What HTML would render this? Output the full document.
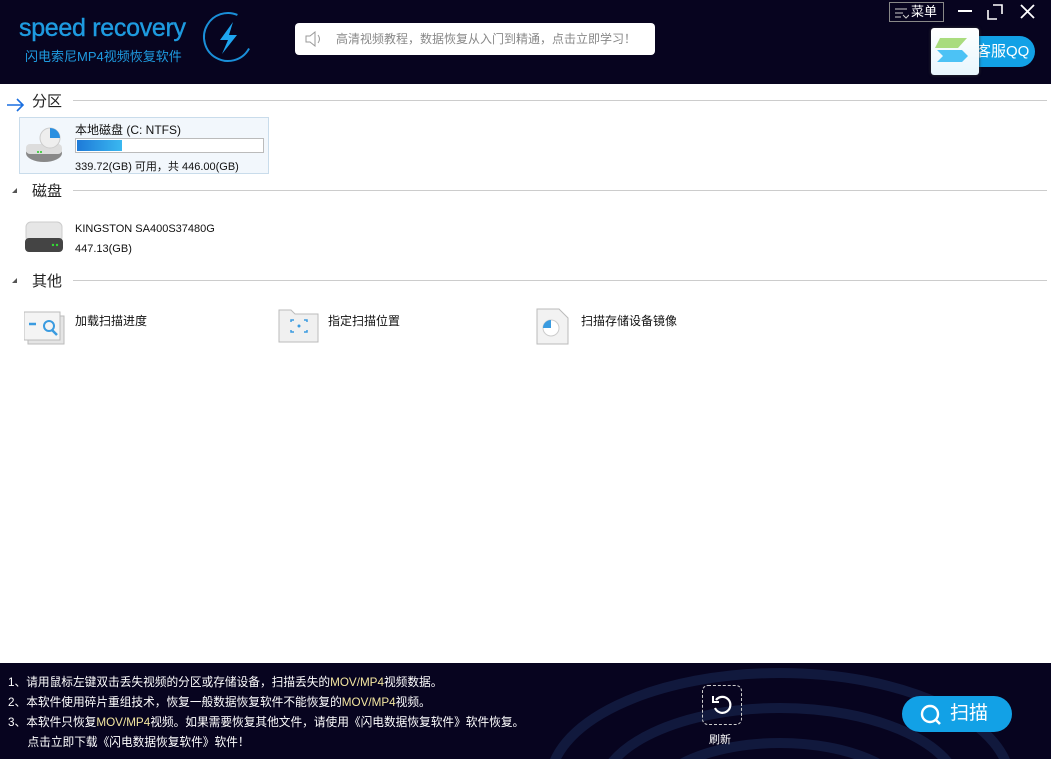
<!DOCTYPE html>
<html><head><meta charset="utf-8"><style>
*{margin:0;padding:0;box-sizing:border-box}
html,body{width:1051px;height:759px;overflow:hidden}
body{background:#fff;font-family:"Liberation Sans","Noto Sans CJK SC",sans-serif;position:relative;font-size:12px;color:#111}
.hdr{position:absolute;left:0;top:0;width:1051px;height:84px;background:#07041f}
.ftr{position:absolute;left:0;top:663px;width:1051px;height:96px;background:#07041f;overflow:hidden}
.sec{position:absolute;left:14px;font-size:15px;color:#222}
.line{position:absolute;left:73px;right:4px;height:1px;background:#ccc}
.tri{position:absolute;width:0;height:0;border-left:5px solid transparent;border-bottom:5px solid #555}
</style></head><body>
<div class="hdr">
 <div style="position:absolute;left:19px;top:14px;color:#1e9be0;font-size:25px;letter-spacing:-0.3px;font-family:'Liberation Sans',sans-serif;-webkit-text-stroke:0.4px #1e9be0">speed recovery</div>
 <div style="position:absolute;left:25px;top:46px;color:#1e9be0;font-size:13px">闪电索尼MP4视频恢复软件</div>
 <svg style="position:absolute;left:200px;top:10px" width="56" height="54"><ellipse cx="28" cy="27" rx="24" ry="24" fill="none" stroke="#1a8fd8" stroke-width="2" stroke-dasharray="110 40" transform="rotate(30 28 27)"/><path d="M33 12 L20 30 L28 30 L22 44 L37 25 L29 25 Z" fill="#1ea5f0"/></svg>
 <div style="position:absolute;left:295px;top:23px;width:360px;height:32px;background:#fff;border-radius:4px;color:#888;font-size:12px;line-height:32px;padding-left:41px">高清视频教程，数据恢复从入门到精通，点击立即学习！
  <svg style="position:absolute;left:9px;top:8px" width="20" height="16"><path d="M2 5h4l5-4v14l-5-4H2z" fill="none" stroke="#999"/><path d="M14 4q3 4 0 8" fill="none" stroke="#999"/></svg></div>
 <div style="position:absolute;left:889px;top:2px;width:55px;height:20px;border:1px solid #888;color:#fff;font-size:13px;line-height:18px;padding-left:21px">菜单<svg style="position:absolute;left:5px;top:4px" width="14" height="12"><path d="M0 2h12M0 6h8M0 10h6M8 8l3 3 3-3" stroke="#ccc" fill="none"/></svg></div>
 <div style="position:absolute;left:958px;top:10px;width:14px;height:2px;background:#fff"></div>
 <svg style="position:absolute;left:987px;top:4px" width="16" height="16"><path d="M6 1h9v9M1 6v9h9" stroke="#fff" fill="none" stroke-width="1.6"/></svg>
 <svg style="position:absolute;left:1020px;top:4px" width="15" height="15"><path d="M1 1l13 13M14 1L1 14" stroke="#fff" stroke-width="1.8"/></svg>
 <div style="position:absolute;left:950px;top:36px;width:85px;height:31px;background:#12a1e6;border-radius:16px;color:#fff;font-size:15px;line-height:31px;padding-left:26px">客服QQ</div>
 <div style="position:absolute;left:931px;top:28px;width:48px;height:47px;background:linear-gradient(#fff,#e8f6fd);border-radius:3px;box-shadow:0 0 3px #333">
  <svg width="48" height="47"><path d="M9 10h27l-9 10H4z" fill="#a9dc7e"/><path d="M6 22h25l6 6-6 6H6l6-6z" fill="#4cc2f5"/></svg></div>
</div>

<svg style="position:absolute;left:6px;top:96px" width="20" height="16"><path d="M1 9h16M11 3l6 6-6 6" stroke="#1a6fe0" stroke-width="1.6" fill="none"/></svg>
<div class="sec" style="left:32px;top:90px">分区</div><div class="line" style="top:100px"></div>
<div style="position:absolute;left:19px;top:117px;width:250px;height:57px;background:#f2f7fc;border:1px solid #c9dceb"></div>
<svg style="position:absolute;left:22px;top:120px" width="48" height="48"><ellipse cx="22" cy="33" rx="18" ry="9" fill="#888"/><rect x="4" y="24" width="36" height="10" rx="4" fill="#ddd"/><circle cx="28" cy="18" r="10" fill="#eee" stroke="#ccc"/><path d="M28 8a10 10 0 0 1 10 10H28z" fill="#2a8fe0"/><circle cx="16" cy="32" r="1" fill="#2c2"/><circle cx="19" cy="32" r="1" fill="#2c2"/></svg>
<div style="position:absolute;left:75px;top:121px;font-size:12px">本地磁盘 (C: NTFS)</div>
<div style="position:absolute;left:75px;top:138px;width:189px;height:15px;border:1px solid #bbb;background:#fff"><div style="width:45px;height:11px;margin:1px;background:linear-gradient(90deg,#1e7ad8,#3ab8f0)"></div></div>
<div style="position:absolute;left:75px;top:158px;font-size:11px">339.72(GB) 可用，共 446.00(GB)</div>

<div class="tri" style="left:12px;top:188px"></div>
<div class="sec" style="left:32px;top:180px">磁盘</div><div class="line" style="top:190px"></div>
<svg style="position:absolute;left:24px;top:220px" width="40" height="34"><rect x="2" y="2" width="36" height="20" rx="5" fill="#e6e6e6" stroke="#ccc"/><rect x="1" y="18" width="38" height="14" rx="4" fill="#444"/><circle cx="29" cy="25" r="1.2" fill="#3d3"/><circle cx="33" cy="25" r="1.2" fill="#3d3"/></svg>
<div style="position:absolute;left:75px;top:223px;font-size:11px">KINGSTON SA400S37480G</div>
<div style="position:absolute;left:75px;top:243px;font-size:11px">447.13(GB)</div>

<div class="tri" style="left:12px;top:278px"></div>
<div class="sec" style="left:32px;top:270px">其他</div><div class="line" style="top:280px"></div>
<svg style="position:absolute;left:24px;top:310px" width="42" height="36"><rect x="4" y="6" width="36" height="28" fill="#e5e5e5" stroke="#bbb"/><rect x="0" y="2" width="36" height="28" fill="#f4f4f4" stroke="#bbb"/><path d="M5 14h7" stroke="#3a9be0" stroke-width="2.5"/><circle cx="25" cy="16" r="5" fill="none" stroke="#3a9be0" stroke-width="2"/><path d="M28 20l5 5" stroke="#3a9be0" stroke-width="2.5"/></svg>
<div style="position:absolute;left:75px;top:312px;font-size:12px">加载扫描进度</div>
<svg style="position:absolute;left:278px;top:308px" width="42" height="36"><path d="M1 2h12l4 4h23v28H1z" fill="#f0f0f0" stroke="#bbb"/><path d="M13 14v-2h3M26 12h3v2M29 22v2h-3M16 24h-3v-2" stroke="#3a9be0" fill="none" stroke-width="1.5"/><circle cx="21" cy="18" r="1.5" fill="#3a9be0"/></svg>
<div style="position:absolute;left:328px;top:312px;font-size:12px">指定扫描位置</div>
<svg style="position:absolute;left:536px;top:308px" width="34" height="38"><path d="M1 1h22l9 9v26H1z" fill="#f2f2f2" stroke="#bbb"/><circle cx="15" cy="20" r="8" fill="#fff" stroke="#ccc"/><path d="M15 12a8 8 0 0 0-8 8h8z" fill="#3a9be0"/></svg>
<div style="position:absolute;left:581px;top:312px;font-size:12px">扫描存储设备镜像</div>

<div class="ftr">
 <div style="position:absolute;left:540px;top:0;width:480px;height:96px;overflow:hidden"><svg width="480" height="96"><g fill="none" stroke="#16224a" stroke-width="10" opacity="0.7"><ellipse cx="240" cy="120" rx="230" ry="110"/><ellipse cx="240" cy="130" rx="180" ry="85"/><ellipse cx="240" cy="140" rx="130" ry="60"/></g></svg></div>
 <div style="position:absolute;left:8px;top:10px;color:#fff;font-size:11.7px;line-height:20px;white-space:nowrap">1、请用鼠标左键双击丢失视频的分区或存储设备，扫描丢失的<span style="color:#f3e6a0">MOV/MP4</span>视频数据。<br>2、本软件使用碎片重组技术，恢复一般数据恢复软件不能恢复的<span style="color:#f3e6a0">MOV/MP4</span>视频。<br>3、本软件只恢复<span style="color:#f3e6a0">MOV/MP4</span>视频。如果需要恢复其他文件，请使用《闪电数据恢复软件》软件恢复。<br>&nbsp;&nbsp;&nbsp;&nbsp;&nbsp;&nbsp;点击立即下载《闪电数据恢复软件》软件！</div>
 <div style="position:absolute;left:702px;top:22px;width:40px;height:40px;border:1px dashed #ccc;border-radius:6px"><svg width="38" height="38"><path d="M13 14a8 8 0 1 1-1 8" fill="none" stroke="#fff" stroke-width="2.2"/><path d="M10 10v6h6" fill="none" stroke="#fff" stroke-width="2"/></svg></div>
 <div style="position:absolute;left:709px;top:68px;color:#fff;font-size:11px">刷新</div>
 <div style="position:absolute;left:902px;top:33px;width:110px;height:36px;background:#12a1e6;border-radius:18px;color:#fff;font-size:19px;line-height:36px;padding-left:48px">扫描<svg style="position:absolute;left:18px;top:8px" width="24" height="22"><circle cx="10" cy="10" r="8" fill="none" stroke="#fff" stroke-width="2.4"/><path d="M15 15l5 5" stroke="#fff" stroke-width="2.6"/></svg></div>
</div>
</body></html>
